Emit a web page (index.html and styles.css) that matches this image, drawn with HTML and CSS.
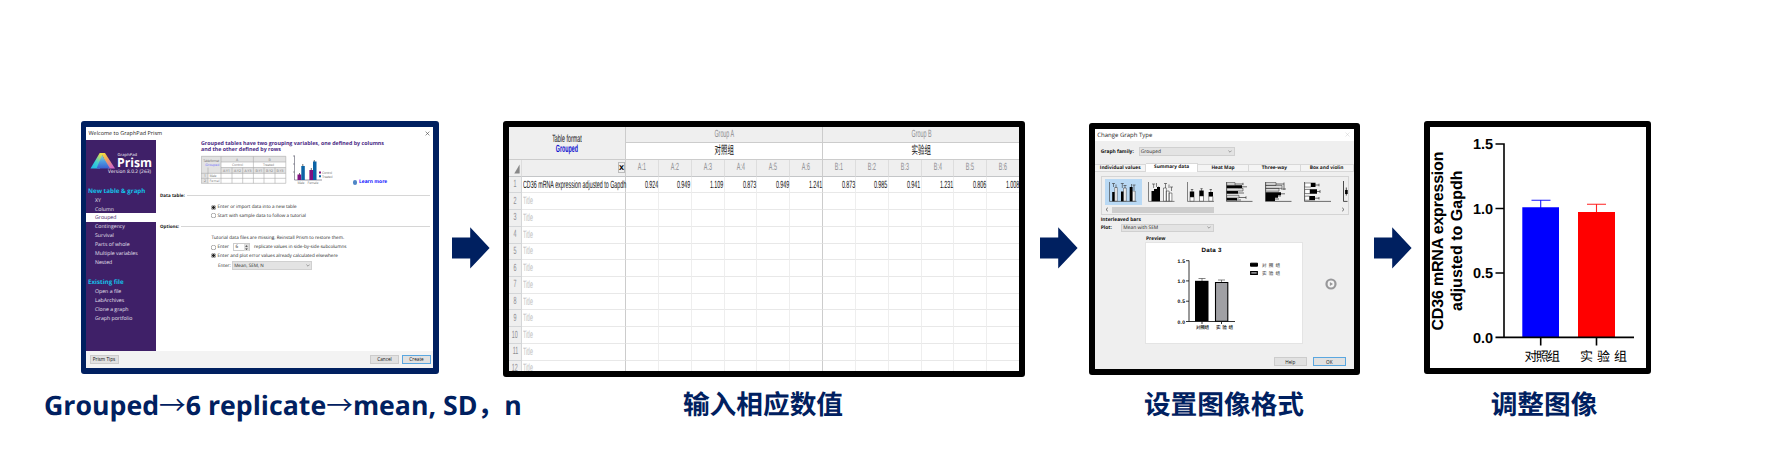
FILE: index.html
```html
<!DOCTYPE html>
<html lang="zh-CN">
<head>
<meta charset="utf-8">
<title>GraphPad Prism</title>
<link rel="stylesheet" href="styles.css">
</head>
<body>
<svg width="0" height="0" class="defs"><defs>
  <symbol id="arrow" viewBox="0 0 38 42"><path d="M0 10.6H18.2V.2L37.6 21 18.2 41.6V31.4H0Z" fill="#002060"/></symbol>
  <symbol id="chev" viewBox="0 0 4 3"><path d="M.4.6 2 2.2 3.6.6" fill="none" stroke="#555" stroke-width=".5"/></symbol>
</defs></svg>
<main class="slide">
<div class="steps">

<section class="panel welcome">
  <header class="bar"><span>Welcome to GraphPad Prism</span><svg width="5" height="5" viewBox="0 0 5 5"><path d="M.6.6 4.4 4.4M4.4.6.6 4.4" stroke="#444" stroke-width=".6"/></svg></header>
  <div class="work">
    <nav class="side">
      <svg class="logo" width="70" height="43" viewBox="0 0 70 43">
        <defs>
          <linearGradient id="g1" x1="0" y1="1" x2=".7" y2="0"><stop offset="0" stop-color="#19b5ea"/><stop offset=".5" stop-color="#3fd0d0"/><stop offset="1" stop-color="#e9e04a"/></linearGradient>
          <linearGradient id="g2" x1="0" y1="0" x2=".6" y2="1"><stop offset="0" stop-color="#f2e43c"/><stop offset=".5" stop-color="#f0a060"/><stop offset="1" stop-color="#d06ac0"/></linearGradient>
          <linearGradient id="g3" x1="0" y1="0" x2="0" y2="1"><stop offset="0" stop-color="#8fdcc0"/><stop offset=".5" stop-color="#4d9ae0"/><stop offset="1" stop-color="#3a5fd0"/></linearGradient>
        </defs>
        <path d="M4.500 28.500 13.700 13H17L14 28.500Z" fill="url(#g1)"/>
        <path d="M15.500 13H19L29 28.500H22Z" fill="url(#g2)"/>
        <path d="M16 15 24 28.500H10.500Z" fill="url(#g3)"/>
        <text x="31.5" y="15.8" class="lg1" textLength="19.5">GraphPad</text>
        <text x="31" y="27" class="lg2" textLength="35" lengthAdjust="spacingAndGlyphs">Prism</text>
        <text x="22" y="33.4" class="lg3" textLength="43">Version 8.0.2 (263)</text>
      </svg>
      <h3>New table &amp; graph</h3>
      <ul><li>XY</li><li>Column</li><li class="on">Grouped</li><li>Contingency</li><li>Survival</li><li>Parts of whole</li><li>Multiple variables</li><li>Nested</li></ul>
      <h3 class="second">Existing file</h3>
      <ul><li>Open a file</li><li>LabArchives</li><li>Clone a graph</li><li>Graph portfolio</li></ul>
    </nav>
    <div class="form">
      <div class="intro">
        <h2>Grouped tables have two grouping variables, one defined by columns<br>and the other defined by rows</h2>
        <div class="pics">
          <svg width="86" height="30" viewBox="0 0 86 30">
            <rect x=".3" y="1.3" width="84.5" height="27" fill="#fff"/>
            <path d="M.3 1.3H84.8V7H.3ZM.3 7H20V18.5H.3ZM20 12.5H84.8V18.5H20ZM.3 18H7V28.3H.3Z" fill="#e2e2e2"/>
            <path d="M.3 1.3H84.8V28.3H.3ZM20 7H84.8M20 12.5H84.8M0 18.3H84.8M0 23.3H84.8M20 1.3V28.3M52.4 1.3V28.3M7 12.5V28.3M31 12.5V28.3M41.7 12.5V28.3M63 12.5V28.3M74 12.5V28.3" fill="none" stroke="#aaa" stroke-width=".6"/>
            <g class="tiny"><text x="2.2" y="7" textLength="16">Table format</text><text x="4.3" y="11.2" fill="#66f" textLength="14">Grouped</text><text x="35" y="5.6">A</text><text x="67.5" y="5.6">B</text><text x="31" y="11.3" textLength="11">Control</text><text x="62" y="11.3" textLength="11">Treated</text>
            <text x="22" y="17" textLength="7">A:Y1</text><text x="33" y="17" textLength="7">A:Y2</text><text x="43.5" y="17" textLength="7">A:Y3</text><text x="54.5" y="17" textLength="7">B:Y1</text><text x="65" y="17" textLength="7">B:Y2</text><text x="75.5" y="17" textLength="7">B:Y3</text>
            <text x="3" y="22.2">1</text><text x="3" y="27.3">2</text><text x="8.5" y="22.2" textLength="7">Male</text><text x="8.5" y="27.3" textLength="10">Femal</text></g>
          </svg>
          <svg width="46" height="32" viewBox="0 0 46 32">
            <path d="M7.500 .5V25H35M6 1H7.500M6 9H7.500M6 17H7.500" fill="none" stroke="#556" stroke-width=".6"/>
            <path d="M12.500 18V20M15.800 9V12M24.300 13V16M27.300 5V8" stroke="#333" stroke-width=".7"/>
            <path d="M10.500 19.500H14.300V25H10.500ZM22.400 15H26V25H22.400Z" fill="#80107f"/><path d="M14.300 11H17.800V25H14.300ZM26 6.500H29.500V25H26Z" fill="#0b63a5"/>
            <path d="M32 16.500h2v2h-2z" fill="#80107f"/><path d="M32 20.300h2v2h-2z" fill="#0b63a5"/>
            <g class="tiny"><text x="35" y="18.900" textLength="10">Control</text><text x="35" y="22.800" textLength="10.500">Treated</text><text x="10.500" y="29.400" textLength="7">Male</text><text x="20.500" y="29.400" textLength="11">Female</text></g>
          </svg>
          <span class="learn"><i></i>Learn more</span>
        </div>
      </div>
      <div class="group">Data table:<hr></div>
      <div class="row first"><i class="radio sel"></i><span>Enter or import data into a new table</span></div>
      <div class="row"><i class="radio"></i><span>Start with sample data to follow a tutorial</span></div>
      <div class="group opt">Options:<hr></div>
      <div class="row note"><span>Tutorial data files are missing. Reinstall Prism to restore them.</span></div>
      <div class="row"><i class="radio"></i><span>Enter</span><b class="num">6<svg width="5" height="7" viewBox="0 0 5 7"><path d="M0 0h5v7H0z" fill="#ddd"/><path d="M1.200 2.800 2.500 1.200 3.800 2.800M1.200 4.400 2.500 5.900 3.800 4.400" fill="#333"/></svg></b><span>replicate values in side-by-side subcolumns</span></div>
      <div class="row"><i class="radio sel"></i><span>Enter and plot error values already calculated elsewhere</span></div>
      <div class="row enter"><span>Enter:</span><b class="select">Mean, SEM, N<svg width="4" height="3"><use href="#chev"/></svg></b></div>
    </div>
  </div>
  <footer class="foot"><button>Prism Tips</button><button class="push">Cancel</button><button class="def">Create</button></footer>
</section>

<svg class="arrow a1" width="38" height="42"><use href="#arrow"/></svg>

<section class="panel sheet">
  <div class="grid">
    <div class="corner"><span class="n">Table format</span><span class="n blue">Grouped</span></div>
    <div class="grp h"><span class="n">Group A</span></div><div class="grp h"><span class="n">Group B</span></div>
    <div class="grp w"><span class="n cn">对照组</span></div><div class="grp w"><span class="n cn">实验组</span></div>
    <div class="ch tri"><svg width="6" height="10" viewBox="0 0 6 10"><path d="M5.600.5V9.500H.3Z" fill="#888"/></svg></div>
    <div class="ch x"><b>x</b></div>
    <div class="ch"><span class="n">A:1</span></div><div class="ch"><span class="n">A:2</span></div><div class="ch"><span class="n">A:3</span></div><div class="ch"><span class="n">A:4</span></div><div class="ch"><span class="n">A:5</span></div><div class="ch e"><span class="n">A:6</span></div><div class="ch"><span class="n">B:1</span></div><div class="ch"><span class="n">B:2</span></div><div class="ch"><span class="n">B:3</span></div><div class="ch"><span class="n">B:4</span></div><div class="ch"><span class="n">B:5</span></div><div class="ch"><span class="n">B:6</span></div>
    <div class="rn"><span class="n">1</span></div><div class="t dark"><span class="n">CD36 mRNA expression adjusted to Gapdh</span></div>
    <div class="c"><span class="n">0.924</span></div><div class="c"><span class="n">0.949</span></div><div class="c"><span class="n">1.109</span></div><div class="c"><span class="n">0.873</span></div><div class="c"><span class="n">0.949</span></div><div class="c e"><span class="n">1.241</span></div><div class="c"><span class="n">0.873</span></div><div class="c"><span class="n">0.985</span></div><div class="c"><span class="n">0.941</span></div><div class="c"><span class="n">1.231</span></div><div class="c"><span class="n">0.806</span></div><div class="c"><span class="n">1.008</span></div>
    <div class="rn"><span class="n">2</span></div><div class="t"><span class="n">Title</span></div><div class="c"></div><div class="c"></div><div class="c"></div><div class="c"></div><div class="c"></div><div class="c e"></div><div class="c"></div><div class="c"></div><div class="c"></div><div class="c"></div><div class="c"></div><div class="c"></div>
    <div class="rn"><span class="n">3</span></div><div class="t"><span class="n">Title</span></div><div class="c"></div><div class="c"></div><div class="c"></div><div class="c"></div><div class="c"></div><div class="c e"></div><div class="c"></div><div class="c"></div><div class="c"></div><div class="c"></div><div class="c"></div><div class="c"></div>
    <div class="rn"><span class="n">4</span></div><div class="t"><span class="n">Title</span></div><div class="c"></div><div class="c"></div><div class="c"></div><div class="c"></div><div class="c"></div><div class="c e"></div><div class="c"></div><div class="c"></div><div class="c"></div><div class="c"></div><div class="c"></div><div class="c"></div>
    <div class="rn"><span class="n">5</span></div><div class="t"><span class="n">Title</span></div><div class="c"></div><div class="c"></div><div class="c"></div><div class="c"></div><div class="c"></div><div class="c e"></div><div class="c"></div><div class="c"></div><div class="c"></div><div class="c"></div><div class="c"></div><div class="c"></div>
    <div class="rn"><span class="n">6</span></div><div class="t"><span class="n">Title</span></div><div class="c"></div><div class="c"></div><div class="c"></div><div class="c"></div><div class="c"></div><div class="c e"></div><div class="c"></div><div class="c"></div><div class="c"></div><div class="c"></div><div class="c"></div><div class="c"></div>
    <div class="rn"><span class="n">7</span></div><div class="t"><span class="n">Title</span></div><div class="c"></div><div class="c"></div><div class="c"></div><div class="c"></div><div class="c"></div><div class="c e"></div><div class="c"></div><div class="c"></div><div class="c"></div><div class="c"></div><div class="c"></div><div class="c"></div>
    <div class="rn"><span class="n">8</span></div><div class="t"><span class="n">Title</span></div><div class="c"></div><div class="c"></div><div class="c"></div><div class="c"></div><div class="c"></div><div class="c e"></div><div class="c"></div><div class="c"></div><div class="c"></div><div class="c"></div><div class="c"></div><div class="c"></div>
    <div class="rn"><span class="n">9</span></div><div class="t"><span class="n">Title</span></div><div class="c"></div><div class="c"></div><div class="c"></div><div class="c"></div><div class="c"></div><div class="c e"></div><div class="c"></div><div class="c"></div><div class="c"></div><div class="c"></div><div class="c"></div><div class="c"></div>
    <div class="rn"><span class="n">10</span></div><div class="t"><span class="n">Title</span></div><div class="c"></div><div class="c"></div><div class="c"></div><div class="c"></div><div class="c"></div><div class="c e"></div><div class="c"></div><div class="c"></div><div class="c"></div><div class="c"></div><div class="c"></div><div class="c"></div>
    <div class="rn"><span class="n">11</span></div><div class="t"><span class="n">Title</span></div><div class="c"></div><div class="c"></div><div class="c"></div><div class="c"></div><div class="c"></div><div class="c e"></div><div class="c"></div><div class="c"></div><div class="c"></div><div class="c"></div><div class="c"></div><div class="c"></div>
    <div class="rn"><span class="n">12</span></div><div class="t"><span class="n">Title</span></div><div class="c"></div><div class="c"></div><div class="c"></div><div class="c"></div><div class="c"></div><div class="c e"></div><div class="c"></div><div class="c"></div><div class="c"></div><div class="c"></div><div class="c"></div><div class="c"></div>
  </div>
</section>

<svg class="arrow a2" width="38" height="42"><use href="#arrow"/></svg>

<section class="panel dialog">
  <header class="bar"><span>Change Graph Type</span><svg width="5" height="5" viewBox="0 0 5 5"><path d="M.5.5 4.500 4.500M4.500.5.5 4.500" stroke="#ccc" stroke-width=".5"/></svg></header>
  <div class="family"><strong>Graph family:</strong><b class="select">Grouped<svg width="4" height="3"><use href="#chev"/></svg></b></div>
  <div class="tabs"><span>Individual values</span><span class="on">Summary data</span><span>Heat Map</span><span>Three-way</span><span>Box and violin</span></div>
  <div class="list">
    <div class="icons">
      <svg class="sel" width="37" height="26" viewBox="0 0 37 26"><path d="M4.500 3V22.400H31.500" fill="none" stroke="#333" stroke-width=".6"/><path d="M8.500 8V4.500M7 4.500h3M11 10V5.500M17.300 9V4.500M15.800 4.500h3M20 9V6.500M18.500 6.500h3M26.500 9V5M29 11V6M27.500 6h3" stroke="#333" stroke-width=".6"/><path d="M7.200 13h2.600v9.200H7.200zM16 12.500h2.700v9.700H16zM24.700 8h2.900v14.200h-2.900z"/><path d="M9.800 8.500h2.400v13.700H9.800zM18.700 9h2.500v13.200h-2.500zM27.600 12h2.500v10.200h-2.500z" fill="#fff" stroke="#222" stroke-width=".5"/></svg>
      <svg width="27" height="26" viewBox="0 0 27 26"><path d="M.5 3V22.400H26.500M5.600 9V5M4 5h3.200M8.500 8V4M10.500 12V7.500M17.500 9V4.500M16 4.500h3M21 9V5.500M23.500 12V8M22 8h3" fill="none" stroke="#333" stroke-width=".6"/><path d="M3.500 12h2.500V10h3v-2h3v14.200H3.500z"/><path d="M15.500 9h2.800v13.200h-2.800zM18.300 12h2.800v10.200h-2.800zM21.100 14h2.800v8.200h-2.800z" fill="#fff" stroke="#222" stroke-width=".5"/></svg>
      <svg width="27" height="26" viewBox="0 0 27 26"><path d="M.5 3V22.400H27.500M5 14V10M3.800 10.500h2.500M14.500 12V9.500M13.300 9.700h2.500M23.800 13V10M22.500 10.500H25" fill="none" stroke="#333" stroke-width=".6"/><path d="M2.800 12.500h4.400v5.500H2.800zM12.300 11.500h4.400V17h-4.400zM21.600 13H26v4.500h-4.400z"/><path d="M3 18h4v4.200H3zM12.500 17h4v5.200h-4zM21.800 17.500h4v4.700h-4z" fill="#fff" stroke="#222" stroke-width=".5"/></svg>
      <svg width="27" height="26" viewBox="0 0 27 26"><path d="M.5 3V22.400H26.500M8 5h9M17 3.800v2.400M16 7.800h5M12 14h6M20 17.300v2.500M12 18.500h8M17 10h-5M10 21h5" fill="none" stroke="#333" stroke-width=".7"/><path d="M.7 6.300H16v2.800H.7zM.7 12H12v2.800H.7zM.7 19H11v2.600H.7z"/><path d="M.7 3.600H9v2.700H.7zM.7 9.300H17V12H.7zM.7 16.300H13V19H.7z" fill="#ddd" stroke="#222" stroke-width=".5"/></svg>
      <svg width="27" height="26" viewBox="0 0 27 26"><path d="M.5 3V22.400H26.500M10 5h9M19 3.500V11M16 10h5M14 14.800h6M12 17h4M9 20h5" fill="none" stroke="#333" stroke-width=".7"/><path d="M.7 13.200H16v3h-3v2.500h-3V22H.7z"/><path d="M.7 3.600H11v2.800H.7zM.7 6.400H17v3H.7zM.7 9.400H14v2.800H.7z" fill="#ddd" stroke="#222" stroke-width=".5"/></svg>
      <svg width="27" height="26" viewBox="0 0 27 26"><path d="M.5 3V22.400H27M10 6h5M15 4.700v2.600M13 12.500h3M16 11v3M11 19.200h4M15 18v2.500" fill="none" stroke="#333" stroke-width=".7"/><path d="M.7 4H7v4H.7zM.7 10.500H6v4H.7zM.7 17.200H5.500v4H.7z" fill="#fff" stroke="#222" stroke-width=".5"/><path d="M7 3.800h4.500v4.300H7zM6 10.300h7v4.400H6zM5.500 17H11v4.300H5.500z"/></svg>
      <svg class="cut" width="5" height="26" viewBox="0 0 5 26"><path d="M.5 2V22.400H4.500M3.300 8.500v8" fill="none" stroke="#222" stroke-width=".8"/><path d="M2.100 11h2.600v4H2.100z"/></svg>
    </div>
    <div class="scroll"><svg width="4" height="5" viewBox="0 0 4 5"><path d="M2.800.8 1 2.500 2.800 4.200" fill="none" stroke="#333" stroke-width=".7"/></svg><i></i><svg width="4" height="5" viewBox="0 0 4 5"><path d="M1.200.8 3 2.500 1.200 4.200" fill="none" stroke="#333" stroke-width=".7"/></svg></div>
  </div>
  <strong class="inter">Interleaved bars</strong>
  <div class="plot"><strong>Plot:</strong><b class="select">Mean with SEM<svg width="4" height="3"><use href="#chev"/></svg></b></div>
  <strong class="prev">Preview</strong>
  <div class="stage">
    <svg class="preview" width="156" height="100" viewBox="0 0 156 100">
      <text x="55.500" y="9.300" class="pt" textLength="20">Data 3</text>
      <path d="M43 17.500V78.500H89M40 17.700H43M40 37.900H43M40 58.200H43M40 78.500H43M56 78.500v2.500M75.500 78.500v2.500" fill="none" stroke="#000" stroke-width=".8"/>
      <path d="M56 38V35.500M52.500 35.500h7M75.500 39V37M72 37h7" stroke="#333" stroke-width=".6"/>
      <path d="M49 37.800H62.500V78.300H49z"/><path d="M69.500 39.500H81.800V78.300H69.500z" fill="#a0a0a4" stroke="#000" stroke-width="1.100"/>
      <g class="pl"><text x="31.500" y="19.700" textLength="7.500">1.5</text><text x="31.500" y="39.900" textLength="7.500">1.0</text><text x="31.500" y="60.200" textLength="7.500">0.5</text><text x="31.500" y="80.500" textLength="7.500">0.0</text></g>
      <g class="pc"><text x="50" y="86" textLength="13">对照组</text><text x="70" y="86" textLength="17">实验组</text><text x="116" y="24" textLength="18" fill="#555">对照组</text><text x="116" y="32.300" textLength="18" fill="#555">实验组</text></g>
      <path d="M104.500 20.200h7v3h-7z" stroke="#000"/><path d="M104.700 28.500h6.600v2.800h-6.600z" fill="#8a8a8e" stroke="#000" stroke-width="1.200"/>
    </svg>
    <svg class="play" width="12" height="12" viewBox="0 0 12 12"><circle cx="6" cy="6" r="5.600" fill="#98989a"/><circle cx="6" cy="6" r="3.400" fill="#f4f4f4"/><path d="M4.900 4 8 6 4.900 8Z" fill="#98989a"/></svg>
  </div>
  <footer class="foot"><button>Help</button><button class="def">OK</button></footer>
</section>

<svg class="arrow a3" width="38" height="42"><use href="#arrow"/></svg>

<section class="panel result">
  <svg width="216" height="241" viewBox="0 0 216 241">
    <g class="yt"><text transform="translate(12.800 203.500) rotate(-90)" textLength="179">CD36 mRNA expression</text><text transform="translate(32.200 184) rotate(-90)" textLength="140.500">adjusted to Gapdh</text></g>
    <g class="yl"><text x="43" y="21.700" textLength="20">1.5</text><text x="43" y="86.500" textLength="20">1.0</text><text x="43" y="151" textLength="20">0.5</text><text x="43" y="215.500" textLength="20">0.0</text></g>
    <path d="M110.700 81V73.300M101.500 73.300h19" stroke="#1a1aff" stroke-width="1.100"/><path d="M166.500 85V77.300M157 77.300h19" stroke="#f22" stroke-width="1.100"/>
    <path d="M92.300 80.300H129V210H92.300z" fill="#00f"/><path d="M148 85H185V210H148z" fill="#f00"/>
    <path d="M74 16.200V211M65.500 17H74M65.500 81.500H74M65.500 146H74M65.500 210.400H204M110.700 210v8.500M166.500 210v8.500" fill="none" stroke="#000" stroke-width="1.600"/>
    <g class="xl"><text x="94.500" y="234">对</text><text x="105.800" y="234">照</text><text x="117" y="234">组</text><text x="150" y="234">实</text><text x="167" y="234">验</text><text x="184" y="234">组</text></g>
  </svg>
</section>
</div>
<div class="captions"><p class="c1">Grouped<span class="ar">→</span>6 replicate<span class="ar">→</span>mean, SD<span class="zc">，</span>n</p><p>输入相应数值</p><p>设置图像格式</p><p>调整图像</p></div>
</main>
</body>
</html>
```
FILE: styles.css
```css
* { box-sizing: border-box; margin: 0; padding: 0; }
body { background: #fff; font-family: "Open Sans", "Noto Sans CJK SC", sans-serif; text-rendering: geometricPrecision; }
.defs { display: block; height: 0; }
svg { display: block; flex: none; }
ul { list-style: none; }
.slide { width: 1784px; height: 454px; padding-top: 121px; overflow: hidden; }
.steps { display: flex; align-items: flex-start; padding-left: 81px; height: 258px; }
.panel { flex: none; overflow: hidden; border: 6px solid #000; border-radius: 3px; background: #fff; }
.arrow { margin-top: 106px; }
.a1 { margin-left: 13px; margin-right: 13px; }
.a2 { margin-left: 15px; margin-right: 11px; }
.a3 { margin-left: 14px; margin-right: 12px; }

.bar { display: flex; justify-content: space-between; align-items: center; background: #fff; color: #222; }
.foot { display: flex; align-items: center; }
button { font: 4.700px "Open Sans", sans-serif; color: #111; background: #e1e1e1; border: 1px solid #ccc; height: 9px; }
button.def { border-color: #5aa7e0; }
.select { display: flex; justify-content: space-between; align-items: center; background: #e3e3e3; border: 1px solid #d0d0d0; font-weight: 400; color: #222; }

/* Welcome dialog */
.welcome { width: 358px; height: 253px; border: 6px solid #002060; border-left-width: 5px; font-size: 5px; color: #222; display: flex; flex-direction: column; }
.welcome .bar { height: 12.700px; padding: 0 3px 0 2.500px; font-size: 5.500px; }
.work { display: flex; height: 211px; }
.side { width: 70px; background: #3f2068; color: #e6e0ee; font-size: 5.200px; }
.logo text { fill: #fff; }
.logo { margin-bottom: 3px; }
.lg1 { font-size: 4px; }
.lg2 { font-size: 12.500px; font-weight: 700; }
.lg3 { font-size: 4.800px; }
.side h3 { font-size: 6.200px; line-height: 9px; padding-left: 2px; color: #12c2ea; white-space: nowrap; }
.side h3.second { margin-top: 11px; }
.side ul { padding-top: 1px; }
.side li { height: 8.850px; line-height: 9px; padding-left: 9px; white-space: nowrap; }
.side li.on { background: #fff; color: #3f2068; }
.form { flex: 1; padding-left: 4px; white-space: nowrap; }
.intro { height: 52.300px; padding-left: 41px; }
.intro h2 { font-size: 5.320px; line-height: 6.300px; color: #4b2a85; }
.pics { display: flex; padding-top: 2.500px; }
.tiny { font-size: 3.400px; fill: #777; }
.learn { display: flex; align-items: center; gap: 2px; height: 9px; margin: 23px 0 0 19.500px; font-weight: 700; font-size: 4.900px; color: #1414ff; }
.learn i { width: 4.500px; height: 4.500px; border-radius: 50%; background: #4f86c6; }
.group { display: flex; align-items: center; gap: 2px; height: 8px; font-size: 4.500px; font-weight: 700; color: #111; margin-right: 3px; }
.group hr { flex: 1; border: 0; border-top: 1px solid #d6d6d6; }
.row { display: flex; align-items: center; height: 8.800px; padding-left: 51px; font-size: 4.600px; gap: 1.500px; }
.first { margin-top: 2.800px; }
.opt { margin-top: 2.500px; }
.note { margin-top: 3px; padding-left: 51.500px; }
.radio { width: 5px; height: 5px; border-radius: 50%; background: radial-gradient(circle, #fff 0 1.700px, #888 2.300px); }
.radio.sel { background: radial-gradient(circle, #222 0 1.100px, #fff 1.700px, #777 2.300px); }
.num { display: flex; justify-content: space-between; align-items: center; width: 17px; height: 8px; border: 1px solid #ccc; padding-left: 1px; font-weight: 400; margin: 0 2px 0 3px; }
.enter { margin-top: 1px; padding-left: 58px; }
.enter .select { width: 80px; height: 8.500px; padding: 0 1px; }
.welcome .foot { height: 17.300px; background: #f3f3f3; padding: 0 2px 0 3.500px; gap: 3px; }
.welcome button { width: 29px; }
.welcome .push { margin-left: auto; }

/* Data sheet */
.sheet { width: 522px; height: 256px; font-family: "Liberation Sans", "Noto Sans CJK SC", sans-serif; }
.grid { display: grid; grid-template-columns: 13px 104px repeat(12, 32.850px); grid-template-rows: 16.300px 17px 16.400px repeat(12, 16.730px); font-size: 10.500px; line-height: 11px; color: #8c8c90; }
.grid > div { display: flex; align-items: center; justify-content: center; min-width: 0; padding-top: 1px; border-right: 1px solid #eee; border-bottom: 1px solid #e8e8e8; white-space: nowrap; }
.n { flex: none; transform: scaleX(.51); }
.grid > .corner { grid-row: span 2; grid-column: span 2; flex-direction: column; background: #efefef; color: #111; border-color: #ccc; line-height: 10px; }
.corner .blue { color: #1010d0; font-weight: 700; }
.grid > .grp { grid-column: span 6; border-color: #ccc; padding-top: 0; }
.h { background: #efefef; }
.w .cn { color: #111; font-size: 11.500px; transform: scaleX(.56); }
.grid > .ch { background: #efefef; border-bottom-color: #c4c6c8; border-right-color: #ddd; padding-top: 0; }
.grid > .tri { align-items: flex-end; justify-content: flex-end; padding: 0 1px 2px 0; }
.grid > .x { justify-content: flex-end; border-right-color: #ccc; }
.x b { width: 7px; height: 11px; border: 1px solid #bbb; color: #000; font-size: 9px; line-height: 8px; text-align: center; }
.grid > .rn { background: #efefef; border-color: #d4d6d8; padding-top: 0; }
.grid > .t { justify-content: flex-start; padding-left: 1px; color: #bdbdbd; border-right-color: #ccc; }
.t .n { transform-origin: left; }
.grid > .dark { color: #111; }
.grid > .c { justify-content: flex-end; color: #111; }
.c .n { transform-origin: right; }
.grid > .e { border-right-color: #ccc; }

/* Change graph type dialog */
.dialog { width: 271px; height: 252px; margin-top: 2px; background: #efefef; font-size: 4.900px; color: #222; white-space: nowrap; }
.dialog strong { color: #111; }
.dialog .bar { height: 11.700px; padding: 0 4px 0 2.300px; font-size: 6px; }
.family { display: flex; align-items: center; height: 9px; margin-top: 6.500px; padding-left: 5.700px; }
.family strong { width: 38px; }
.family .select { width: 96px; height: 9px; padding: 0 2px 0 1px; }
.tabs { display: grid; grid-template-columns: repeat(4, 51.400px) 53px; margin-top: 7px; height: 9px; align-items: end; }
.tabs span { height: 8px; line-height: 7px; text-align: center; font-size: 4.800px; font-weight: 700; color: #111; background: #f4f4f4; border: 1px solid #d8d8d8; border-left-width: 0; }
.tabs .on { height: 9px; background: #fff; border-bottom: 0; }
.list { margin: 3.500px 5px 0 6px; height: 39px; border: 1px solid #d4d4d4; padding-top: 2px; overflow: hidden; }
.icons { display: flex; padding-left: 3px; }
.icons .sel { background: #b9d9f4; margin-right: 6px; }
.icons svg + svg { margin-right: 12px; }
.icons svg.cut { margin-right: 0; }
.scroll { display: flex; justify-content: space-between; align-items: center; height: 6px; margin-top: 2px; padding: 0 3px; }
.scroll i { width: 102px; height: 6px; background: #cdcdcd; margin: 0 auto 0 2.500px; }
.inter { display: block; margin: 1px 0 0 5.700px; line-height: 8px; }
.plot { display: flex; align-items: center; height: 8.500px; padding-left: 5.700px; }
.plot strong { width: 20.600px; }
.plot .select { width: 93px; height: 8.500px; padding: 0 2px 0 1px; }
.prev { display: block; margin: 2.500px 0 0 51px; line-height: 8px; }
.stage { display: flex; align-items: center; padding-left: 51px; height: 100px; gap: 23px; }
.preview { background: #fff; outline: 1px solid #e4e4e4; }
.play { margin-top: -17px; }
.pt { font: 700 6.200px "Liberation Sans", sans-serif; }
.pl { font: 700 5px "Liberation Sans", sans-serif; }
.pc { font: 500 4.600px "Noto Sans CJK SC", sans-serif; }
.dialog .foot { justify-content: flex-end; gap: 6.500px; margin-top: 14.500px; padding-right: 8.500px; height: 9px; }
.dialog button { width: 32.500px; }

/* Result graph */
.result { width: 227px; height: 253px; border-right-width: 5px; }
.yt { font: 700 16px "Liberation Sans", sans-serif; }
.yl { font: 700 14.500px "Liberation Sans", sans-serif; }
.xl { font: 400 13px "Noto Sans CJK SC", serif; }

.captions { display: grid; grid-template-columns: 476px 486px 436px 204px; padding-left: 44px; color: #002060; font: 700 26.700px/50px "Open Sans", "Noto Sans CJK SC", sans-serif; text-align: center; white-space: nowrap; }
.captions .c1 { text-align: left; }
.ar { font-family: "Noto Sans CJK SC", sans-serif; font-weight: 400; }
.zc { font-family: "Noto Sans CJK SC", sans-serif; }
```
